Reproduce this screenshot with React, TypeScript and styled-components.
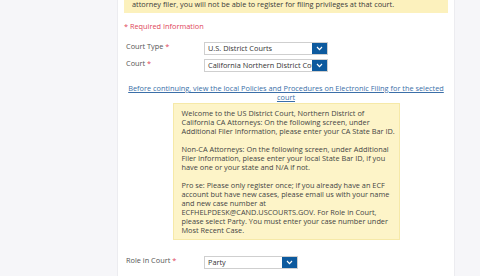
import React from 'react'
import styled, { createGlobalStyle } from 'styled-components'

const GlobalStyle = createGlobalStyle`
	html, body {
		margin: 0;
		padding: 0;
		background: #f6f6f9;
		font-family: 'Open Sans', 'Liberation Sans', Arial, sans-serif;
		color: #333;
	}
`

type SelectProps = {
	value: string
	width: number
}

const Select = (props: SelectProps) => (
	<SelectBox style={{ width: props.width }}>
		<SelectValue>{props.value}</SelectValue>
		<SelectButton>
			<svg width='7' height='5' viewBox='0 0 7 5'>
				<path d='M1 1 L3.5 3.6 L6 1' fill='none' stroke='#fff' strokeWidth='1.2' />
			</svg>
		</SelectButton>
	</SelectBox>
)

const App = () => {
	return (
		<Page>
			<GlobalStyle />
			<Panel>
				<Banner>
					If you are not admitted to practice in that court, or are registering as a non-
					<br />
					attorney filer, you will not be able to register for filing privileges at that court.
				</Banner>
				<Required>* Required Information</Required>
				<Fields>
					<Row>
						<Label>
							Court Type <Star>*</Star>
						</Label>
						<Select value='U.S. District Courts' width={124} />
					</Row>
					<Row>
						<Label>
							Court <Star>*</Star>
						</Label>
						<Select value='California Northern District Court' width={124} />
					</Row>
				</Fields>
				<PolicyLink href='#'>
					Before continuing, view the local Policies and Procedures on Electronic Filing for the selected
					<br />
					court
				</PolicyLink>
				<Notice>
					<p>
						Welcome to the US District Court, Northern District of
						<br />
						California CA Attorneys: On the following screen, under
						<br />
						Additional Filer Information, please enter your CA State Bar ID.
					</p>
					<p>
						Non-CA Attorneys: On the following screen, under Additional
						<br />
						Filer Information, please enter your local State Bar ID, if you
						<br />
						have one or your state and N/A if not.
					</p>
					<p>
						Pro se: Please only register once; if you already have an ECF
						<br />
						account but have new cases, please email us with your name
						<br />
						and new case number at
						<br />
						ECFHELPDESK@CAND.USCOURTS.GOV. For Role in Court,
						<br />
						please select Party. You must enter your case number under
						<br />
						Most Recent Case.
					</p>
				</Notice>
				<RoleRow>
					<Label>
						Role in Court <Star>*</Star>
					</Label>
					<Select value='Party' width={94} />
				</RoleRow>
			</Panel>
		</Page>
	)
}

const Page = styled.div`
	height: 276px;
	overflow: hidden;
`

const Panel = styled.div`
	margin-left: 117px;
	width: 324px;
	height: 300px;
	padding: 0 6px;
	background: #fff;
	border-left: 1px solid #ececf0;
	border-right: 1px solid #ececf0;
	display: flex;
	flex-direction: column;
	font-size: 7.35px;
	line-height: 9px;
`

const Banner = styled.div`
	margin-top: -9px;
	padding: 0 8px 4px;
	background: #fcf1bd;
	color: #3a3a3a;
	white-space: nowrap;
`

const Required = styled.div`
	margin-top: 9px;
	color: #e0455a;
`

const Fields = styled.div`
	margin-top: 11px;
	display: flex;
	flex-direction: column;
	gap: 4px;
`

const Row = styled.div`
	display: flex;
	align-items: flex-start;
`

const RoleRow = styled(Row)`
	margin-top: 16px;
`

const Label = styled.div`
	width: 78px;
	padding-left: 2px;
	color: #555;
`

const Star = styled.span`
	color: #e0455a;
`

const SelectBox = styled.div`
	height: 13px;
	box-sizing: border-box;
	border: 1px solid #cfcfcf;
	background: #fff;
	display: flex;
	align-items: center;
	overflow: hidden;
`

const SelectValue = styled.div`
	flex: 1;
	padding-left: 3px;
	color: #333;
	white-space: nowrap;
	overflow: hidden;
`

const SelectButton = styled.div`
	width: 15px;
	height: 13px;
	flex-shrink: 0;
	background: #0d5a9e;
	display: flex;
	align-items: center;
	justify-content: center;
`

const PolicyLink = styled.a`
	margin-top: 12px;
	text-align: center;
	color: #3b6fa8;
	text-decoration: underline;
	white-space: nowrap;
`

const Notice = styled.div`
	align-self: center;
	width: 227px;
	box-sizing: border-box;
	margin-top: 1px;
	padding: 5px 8px 4px;
	background: #fdf4c8;
	border: 1px solid #f6e9a8;
	color: #444;
	white-space: nowrap;

	p {
		margin: 0 0 9px;
	}

	p:last-child {
		margin-bottom: 0;
	}
`

export default App
